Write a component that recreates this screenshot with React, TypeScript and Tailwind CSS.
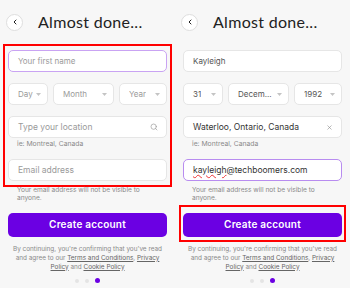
import { Search, X, ChevronLeft } from "lucide-react";

interface PanelProps {
  filled?: boolean;
}

function Caret() {
  return (
    <svg width="5" height="3" viewBox="0 0 5 3" className="shrink-0">
      <path d="M0 0h5L2.5 3z" fill="#c4c4c4" />
    </svg>
  );
}

function Select({ label, width, filled }: { label: string; width: string; filled?: boolean }) {
  return (
    <div
      className={`${width} h-[22px] flex items-center justify-between pl-[9px] pr-[6px] bg-white border border-[#e6e6e6] rounded-[5px] text-[8px] ${
        filled ? "text-[#555]" : "text-[#9a9a9a]"
      }`}
    >
      <span className="truncate">{label}</span>
      <Caret />
    </div>
  );
}

function Panel({ filled }: PanelProps) {
  return (
    <div className="w-[175px] h-[288px] flex flex-col px-[8px] bg-[#f7f7f7]">
      {/* Header */}
      <div className="h-[44px] flex items-center shrink-0">
        <div className="-ml-[2px] w-[17px] h-[17px] rounded-full bg-white border border-[#dedede] flex items-center justify-center">
          <ChevronLeft size={8} strokeWidth={3} color="#222" />
        </div>
        <h1 className="ml-[15px] -mt-px font-['Lato',sans-serif] text-[16px] text-[#222] tracking-[0.3px]">Almost done...</h1>
      </div>

      {/* Form fields */}
      <div
        className={`-mx-[5px] px-[3px] pt-[4px] pb-[4px] border-2 ${
          filled ? "border-transparent" : "border-[#ff0000]"
        } flex flex-col`}
      >
        <div
          className={`h-[22px] flex items-center px-[9px] bg-white rounded-[5px] text-[8px] ${
            filled ? "border border-[#e6e6e6] text-[#555]" : "border border-[#c9a3f3] text-[#9a9a9a]"
          }`}
        >
          {filled ? "Kayleigh" : "Your first name"}
        </div>

        <div className="mt-[11px] flex gap-[5px]">
          <Select label={filled ? "31" : "Day"} width="w-[40px]" filled={filled} />
          <Select label={filled ? "Decem..." : "Month"} width="w-[61px]" filled={filled} />
          <Select label={filled ? "1992" : "Year"} width="w-[48px]" filled={filled} />
        </div>

        <div className="mt-[11px] h-[22px] flex items-center justify-between pl-[9px] pr-[8px] bg-white border border-[#e6e6e6] rounded-[5px]">
          <span className={`text-[8.5px] ${filled ? "text-[#333]" : "text-[#9a9a9a]"}`}>
            {filled ? "Waterloo, Ontario, Canada" : "Type your location"}
          </span>
          {filled ? <X size={7} color="#888" strokeWidth={2} /> : <Search size={8} color="#999" strokeWidth={2} />}
        </div>
        <p className="mt-[2px] pl-[9px] text-[6.8px] leading-[8px] text-[#8a8a8a]">ie: Montreal, Canada</p>

        <div
          className={`mt-[11px] h-[22px] flex items-center px-[9px] bg-white rounded-[5px] ${
            filled ? "border border-[#b88cf0]" : "border border-[#e6e6e6]"
          }`}
        >
          {filled ? (
            <span className="text-[8.5px] text-[#333]">
              <span className="underline decoration-wavy decoration-[#e33] decoration-[0.8px] underline-offset-[1px]">kayleigh</span>
              @techboomers.com
            </span>
          ) : (
            <span className="text-[8.5px] text-[#9a9a9a]">Email address</span>
          )}
        </div>
      </div>

      <p className="-mt-px pl-[9px] text-[6.6px] leading-[8px] text-[#8a8a8a]">
        Your email address will not be visible to
        <br />
        anyone.
      </p>

      {/* Submit */}
      <div
        className={`mt-[3px] -mx-[4px] px-[2px] py-[3px] border-2 ${
          filled ? "border-[#ff0000]" : "border-transparent"
        }`}
      >
        <button className="w-full h-[24px] rounded-[5px] bg-[#6b00e3] text-white text-[10px] font-semibold tracking-[0.2px]">
          Create account
        </button>
      </div>

      <p className="mt-[3px] text-center text-[6.4px] leading-[9px] text-[#8a8a8a]">
        By continuing, you're confirming that you've read
        <br />
        and agree to our <span className="underline text-[#666]">Terms and Conditions</span>,{" "}
        <span className="underline text-[#666]">Privacy</span>
        <br />
        <span className="underline text-[#666]">Policy</span> and{" "}
        <span className="underline text-[#666]">Cookie Policy</span>
      </p>

      <div className="mt-[6px] h-[6px] flex items-center justify-center gap-[6px]">
        <span className="w-[4px] h-[4px] rounded-full bg-[#e4e4e4]" />
        <span className="w-[4px] h-[4px] rounded-full bg-[#e4e4e4]" />
        <span className="w-[5px] h-[5px] rounded-full bg-[#6b00e3]" />
      </div>
    </div>
  );
}

export default function App() {
  return (
    <div className="w-[350px] h-[288px] flex bg-[#f7f7f7] overflow-hidden" style={{ fontFamily: "Inter, 'Noto Sans', sans-serif" }}>
      <Panel />
      <Panel filled />
    </div>
  );
}
